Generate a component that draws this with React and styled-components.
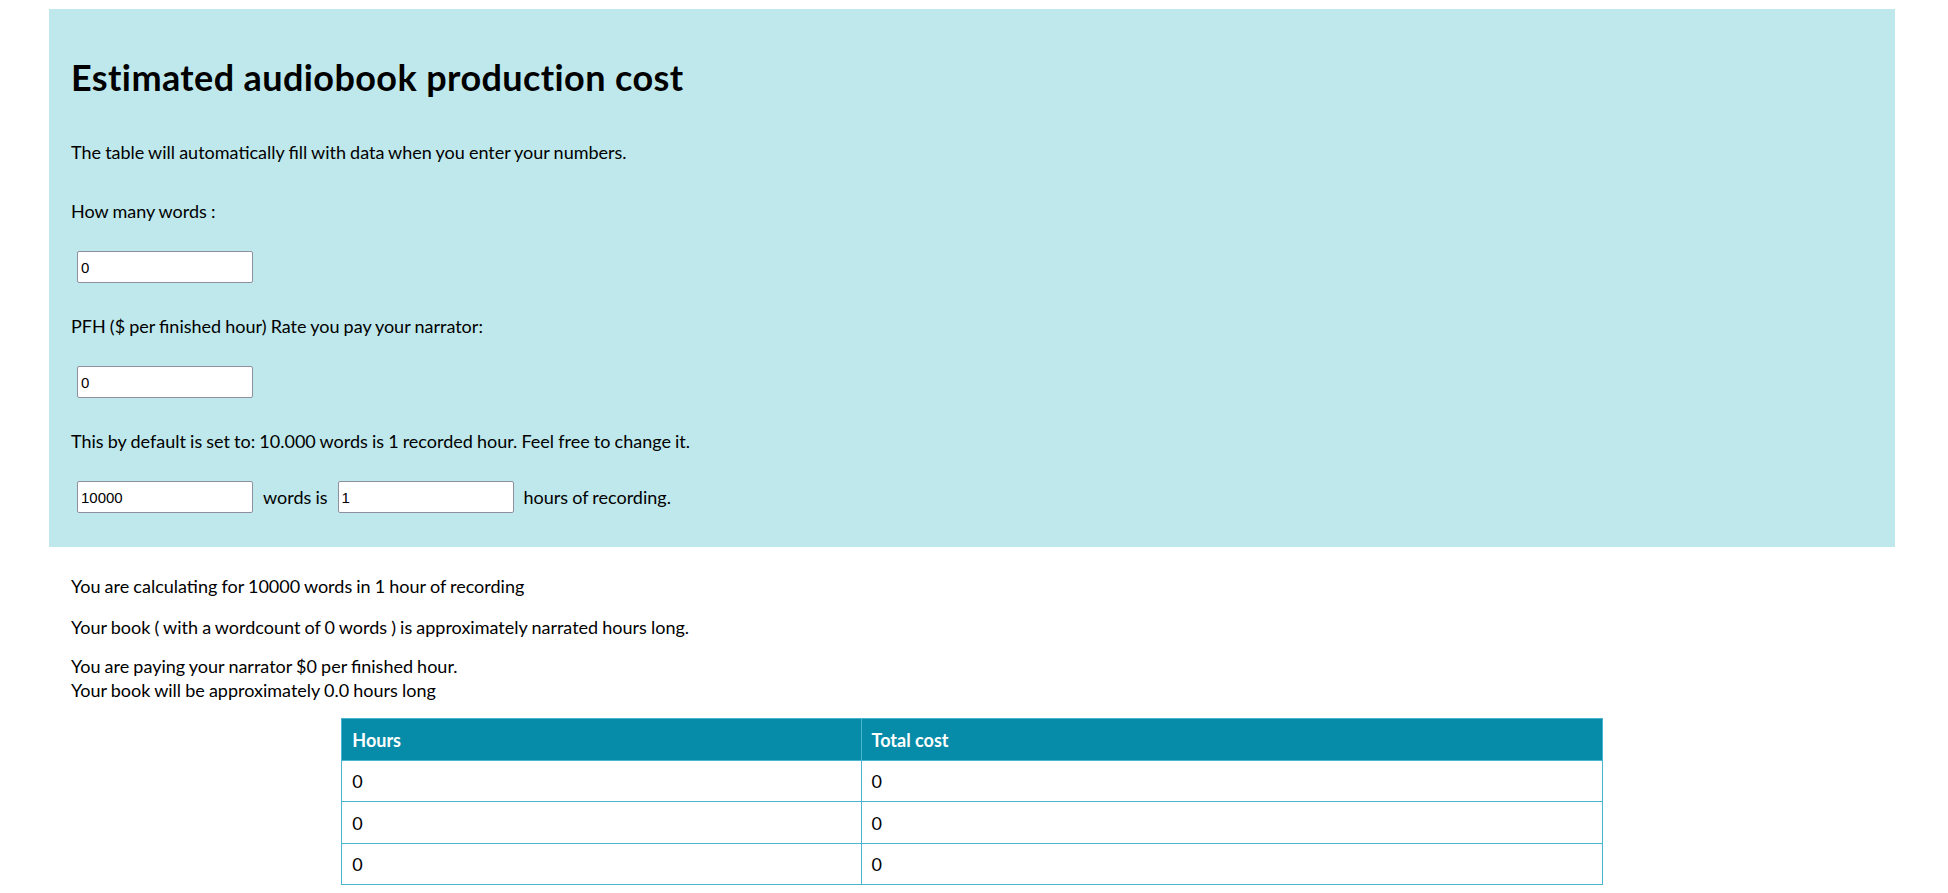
import React from "react";
import styled, { createGlobalStyle } from "styled-components";

const GlobalStyle = createGlobalStyle`
  html, body {
    margin: 0;
    padding: 0;
    background: #ffffff;
  }
  body {
    font-family: Lato, "Open Sans", sans-serif;
    color: #000;
  }
`;

const Wrapper = styled.main`
  margin: 9px 53px 0 49px;
`;

const Panel = styled.section`
  background: #bee8eb;
  padding: 22px 22px 34px;
  display: flex;
  flex-direction: column;
  align-items: flex-start;
`;

const Title = styled.h1`
  margin: 24px 0 0;
  font-family: Lato, sans-serif;
  font-size: 36px;
  font-weight: 700;
  letter-spacing: 0.4px;
  line-height: normal;
  color: #000;
`;

const Text = styled.p`
  margin: ${(p) => p.$top || 0}px 0 0;
  font-size: 18px;
  word-spacing: -0.5px;
  line-height: 20px;
  color: #000;
`;

const FieldRow = styled.div`
  margin-top: 30px;
  display: flex;
  align-items: center;
  font-size: 18px;
  word-spacing: -0.5px;
  line-height: 20px;
`;

const Input = styled.input`
  box-sizing: border-box;
  width: 176px;
  height: 32px;
  margin: 0 6px;
  padding: 0 3px;
  border: 1px solid #8f8f9d;
  border-radius: 2px;
  background: #fff;
  font-family: "Liberation Sans", Arial, sans-serif;
  font-size: 15px;
  word-spacing: normal;
  color: #000;
  outline: none;
`;

const Inline = styled.span`
  margin: 0 4px;
`;

const Results = styled.section`
  padding: 0 22px;
  display: flex;
  flex-direction: column;
`;

const ResultText = styled.p`
  margin: ${(p) => p.$top || 0}px 0 0;
  font-size: 18px;
  word-spacing: -0.5px;
  line-height: 24px;
  color: #000;
`;

const Table = styled.table`
  width: 70%;
  margin: 16px auto 0;
  border-collapse: collapse;
  font-size: 18px;
`;

const HeadCell = styled.th`
  background: #068ba8;
  color: #fff;
  font-weight: 700;
  text-align: left;
  height: 42px;
  box-sizing: border-box;
  padding: 0 10px;
  border: 1px solid #4bb5d0;
  width: ${(p) => p.$w || "auto"};
`;

const Cell = styled.td`
  height: 41.4px;
  box-sizing: border-box;
  padding: 0 10px;
  border: 1px solid #4bb5d0;
  color: #000;
  background: #fff;
`;

const rows = [
  { hours: 0, cost: 0 },
  { hours: 0, cost: 0 },
  { hours: 0, cost: 0 },
];

export default function App() {
  return (
    <>
      <GlobalStyle />
      <Wrapper>
        <Panel>
          <Title>Estimated audiobook production cost</Title>
          <Text $top={43}>
            The table will automatically fill with data when you enter your numbers.
          </Text>
          <Text $top={39}>How many words :</Text>
          <FieldRow>
            <Input type="text" defaultValue="0" />
          </FieldRow>
          <Text $top={33}>PFH ($ per finished hour) Rate you pay your narrator:</Text>
          <FieldRow>
            <Input type="text" defaultValue="0" />
          </FieldRow>
          <Text $top={33}>
            This by default is set to: 10.000 words is 1 recorded hour. Feel free to change it.
          </Text>
          <FieldRow>
            <Input type="text" defaultValue="10000" />
            <Inline>words is</Inline>
            <Input type="text" defaultValue="1" />
            <Inline>hours of recording.</Inline>
          </FieldRow>
        </Panel>
        <Results>
          <ResultText $top={27}>You are calculating for 10000 words in 1 hour of recording</ResultText>
          <ResultText $top={17}>
            Your book ( with a wordcount of 0 words ) is approximately narrated hours long.
          </ResultText>
          <ResultText $top={15}>
            You are paying your narrator $0 per finished hour.
            <br />
            Your book will be approximately 0.0 hours long
          </ResultText>
          <Table>
            <thead>
              <tr>
                <HeadCell $w="41.2%">Hours</HeadCell>
                <HeadCell>Total cost</HeadCell>
              </tr>
            </thead>
            <tbody>
              {rows.map((r, i) => (
                <tr key={i}>
                  <Cell>{r.hours}</Cell>
                  <Cell>{r.cost}</Cell>
                </tr>
              ))}
            </tbody>
          </Table>
        </Results>
      </Wrapper>
    </>
  );
}
